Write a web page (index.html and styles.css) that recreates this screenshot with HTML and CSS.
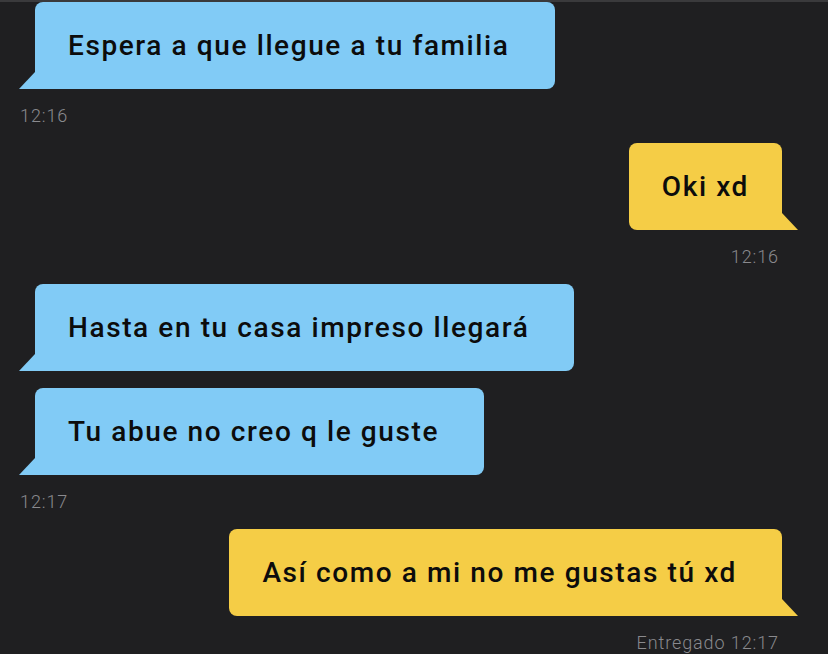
FILE: index.html
```html
<!DOCTYPE html>
<html lang="es">
<head>
    <meta charset="UTF-8">
    <meta name="viewport" content="width=device-width, initial-scale=1.0">
    <title>Chat</title>
    <link rel="stylesheet" href="styles.css">
</head>
<body>
    <div class="topbar"></div>
    <div class="chat">
        <div class="group them">
            <div class="bubble">Espera a que llegue a tu familia</div>
            <div class="time">12:16</div>
        </div>
        <div class="group me">
            <div class="bubble short">Oki xd</div>
            <div class="time">12:16</div>
        </div>
        <div class="group them">
            <div class="bubble">Hasta en tu casa impreso llegará</div>
            <div class="bubble">Tu abue no creo q le guste</div>
            <div class="time">12:17</div>
        </div>
        <div class="group me">
            <div class="bubble">Así como a mi no me gustas tú xd</div>
            <div class="time">Entregado 12:17</div>
        </div>
    </div>
</body>
</html>
```

FILE: styles.css
```css
body {
    font-family: Roboto, 'Liberation Sans', sans-serif;
    margin: 0;
    padding: 0;
    background-color: #1f1f21;
    color: #0c0c0c;
    width: 828px;
    height: 654px;
    overflow: hidden;
}
.topbar {
    height: 2px;
    background-color: #3a3a3c;
}
.chat {
    display: flex;
    flex-direction: column;
    gap: 16px;
}
.group {
    display: flex;
    flex-direction: column;
    gap: 17px;
}
.group.them {
    align-items: flex-start;
    padding-left: 35px;
}
.group.me {
    align-items: flex-end;
    padding-right: 46px;
}
.bubble {
    position: relative;
    font-size: 28px;
    font-weight: 500;
    letter-spacing: 1.6px;
    line-height: 35px;
    padding: 26px 45px 26px 33px;
    border-radius: 8px;
}
.bubble.short {
    padding-right: 33px;
}
.them .bubble {
    background-color: #81cbf6;
    border-bottom-left-radius: 0;
}
.me .bubble {
    background-color: #f5cd46;
    border-bottom-right-radius: 0;
}
.bubble::after {
    content: "";
    position: absolute;
    bottom: 0;
    width: 0;
    height: 0;
}
.them .bubble::after {
    left: -16px;
    border-bottom: 17px solid #81cbf6;
    border-left: 16px solid transparent;
}
.me .bubble::after {
    right: -16px;
    border-bottom: 17px solid #f5cd46;
    border-right: 16px solid transparent;
}
.time {
    font-size: 18px;
    font-weight: 300;
    letter-spacing: 0.9px;
    line-height: 22px;
    margin-top: -1px;
    color: #8a8a8e;
}
.them .time {
    margin-left: -15px;
}
.me .time {
    margin-right: 3px;
}
```
